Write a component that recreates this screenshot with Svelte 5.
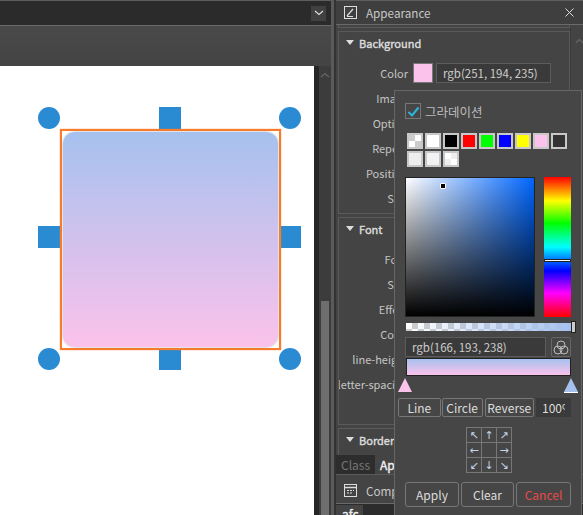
<script>
  // Editor view: canvas with a selected box on the left, appearance panel with colour picker on the right
  const swatches = [
    { cls: 'checker' }, { color: '#ffffff' }, { color: '#000000' }, { color: '#ff0000' }, { color: '#00ff00' },
    { color: '#0000ff' }, { color: '#ffff00' }, { color: '#fbc2eb' }, { color: '#333333' },
    { color: '#eeeeee' }, { color: '#f1f2f4' }, { cls: 'checker alt' },
  ];

  const bgFields = ['Image', 'Option', 'Repeat', 'Position', 'Size'];
  const fontFields = ['Font', 'Size', 'Effect', 'Color', 'line-height', 'letter-spacing'];

  const grid = ['↖', '↑', '↗', '←', '', '→', '↙', '↓', '↘'];
</script>

<div class="app">
  <div class="left">
    <div class="titlebar">
      <span class="chev">
        <svg width="10" height="6" viewBox="0 0 10 6"><path d="M1 1l4 3.5L9 1" fill="none" stroke="#ddd" stroke-width="1.2" /></svg>
      </span>
    </div>
    <div class="toolbar"></div>
    <div class="canvasrow">
      <div class="canvas">
        <div class="handle round" style="left:38px;top:41px"></div>
        <div class="handle" style="left:159px;top:41px"></div>
        <div class="handle round" style="left:279px;top:41px"></div>
        <div class="handle" style="left:38px;top:160px"></div>
        <div class="handle" style="left:279px;top:160px"></div>
        <div class="handle round" style="left:38px;top:282px"></div>
        <div class="handle" style="left:159px;top:282px"></div>
        <div class="handle round" style="left:279px;top:282px"></div>
        <div class="selection"><div class="box"></div></div>
      </div>
      <div class="vscroll">
        <svg class="up" width="10" height="6" viewBox="0 0 10 6"><path d="M1 5l4-3.5L9 5" fill="none" stroke="#666" stroke-width="1.3" /></svg>
        <div class="thumb"></div>
      </div>
    </div>
  </div>

  <div class="splitter"></div>

  <div class="panel">
    <div class="head">
      <svg width="13" height="13" viewBox="0 0 13 13">
        <rect x="0.5" y="0.5" width="12" height="12" fill="none" stroke="#ddd" />
        <path d="M3 10L9 3M3 10.5h6" fill="none" stroke="#ddd" stroke-width="1.2" />
      </svg>
      <span class="head-title">Appearance</span>
      <svg class="close" width="9" height="9" viewBox="0 0 9 9"><path d="M.5.5l8 8M8.5.5l-8 8" stroke="#ddd" /></svg>
    </div>

    <div class="body">
      <div class="sections">
        <div class="stub"></div>

        <section class="group bg">
          <h3><i class="tri"></i>Background</h3>
          <div class="field color">
            <span class="lbl">Color</span>
            <span class="chip"></span>
            <span class="value">rgb(251, 194, 235)</span>
          </div>
          {#each bgFields as f}
            <div class="field"><span class="lbl">{f}</span></div>
          {/each}
        </section>

        <section class="group font">
          <h3><i class="tri"></i>Font</h3>
          {#each fontFields as f}
            <div class="field"><span class="lbl">{f}</span></div>
          {/each}
        </section>

        <section class="group border">
          <h3><i class="tri"></i>Border</h3>
        </section>
      </div>
      <div class="pscroll">
        <svg width="9" height="6" viewBox="0 0 10 6"><path d="M1 5l4-3.5L9 5" fill="none" stroke="#666" stroke-width="1.3" /></svg>
      </div>
    </div>

    <div class="tabs">
      <span class="tab">Class</span>
      <span class="tab on">Appearance</span>
    </div>

    <div class="head comp">
      <svg width="13" height="13" viewBox="0 0 13 13">
        <rect x="0.5" y="0.5" width="12" height="12" fill="none" stroke="#ddd" />
        <path d="M0 3.5h13" stroke="#ddd" stroke-width="1.5" />
        <path d="M3 6.5h2M6 6.5h2M9 6.5h1M3 9h2M6 9h2" stroke="#ddd" />
      </svg>
      <span class="head-title">Comp</span>
    </div>
    <div class="afc"><span>afc</span></div>
  </div>

  <div class="picker">
    <div class="grad-check">
      <span class="check">
        <svg width="13" height="11" viewBox="0 0 13 11"><path d="M1.5 6l3.5 3.5L11.5 1.5" fill="none" stroke="#2bb7dc" stroke-width="2" /></svg>
      </span>
      <span class="grad-label">그라데이션</span>
    </div>

    <div class="swatches">
      {#each swatches as s}
        <span class="swatch {s.cls ?? ''}" style={s.color ? `background:${s.color}` : ''}></span>
      {/each}
    </div>

    <div class="spectrum">
      <div class="sv"><span class="dot"></span></div>
      <div class="hue"><span class="hue-mark"></span></div>
    </div>

    <div class="alpha"><span class="alpha-grip"></span></div>

    <div class="rgb-row">
      <span class="rgb">rgb(166, 193, 238)</span>
      <span class="wheel">
        <svg width="16" height="15" viewBox="0 0 16 15" fill="none" stroke="#bbb">
          <circle cx="8" cy="5" r="4" /><circle cx="5" cy="10" r="4" /><circle cx="11" cy="10" r="4" />
        </svg>
      </span>
    </div>

    <div class="gradbar"></div>
    <div class="stops">
      <svg width="14" height="15" viewBox="0 0 14 15"><path d="M7 0l7 14H0z" fill="#fbc2eb" /></svg>
      <svg width="14" height="15" viewBox="0 0 14 15"><path d="M7 0l7 14H0z" fill="#a6c1ee" /><path d="M0 14.5h14" stroke="#fff" /></svg>
    </div>

    <div class="kinds">
      <span class="btn line">Line</span>
      <span class="btn circle">Circle</span>
      <span class="btn reverse">Reverse</span>
      <input class="pct" value="100%" readonly />
    </div>

    <div class="dirs">
      {#each grid as g}
        <span class="dir">{g}</span>
      {/each}
    </div>

    <div class="actions">
      <span class="act apply">Apply</span>
      <span class="act clear">Clear</span>
      <span class="act cancel">Cancel</span>
    </div>
  </div>
</div>

<style>
  :global(body) {
    background: #444;
  }

  .app {
    position: relative;
    display: flex;
    width: 583px;
    height: 515px;
    overflow: hidden;
    font-family: 'Noto Sans CJK KR', 'Noto Sans', sans-serif;
    font-size: 12px;
    color: #ccc;
    background: #444;
  }

  .left {
    display: flex;
    flex-direction: column;
    width: 331px;
    flex: none;
  }

  .titlebar {
    display: flex;
    justify-content: flex-end;
    align-items: center;
    height: 26px;
    padding-right: 5px;
    box-sizing: border-box;
    background: #2b2b2b;
    border-top: 1px solid #5e5e5e;
    border-bottom: 1px solid #6a6a6a;
  }

  .chev {
    display: flex;
    align-items: center;
    justify-content: center;
    width: 15px;
    height: 15px;
    background: #414141;
  }

  .toolbar {
    height: 40px;
    background: linear-gradient(#494949, #444);
  }

  .canvasrow {
    display: flex;
    flex: 1;
  }

  .canvas {
    position: relative;
    width: 314px;
    background: #fff;
  }

  .handle {
    position: absolute;
    width: 22px;
    height: 22px;
    background: #2a8bd2;
  }

  .round {
    border-radius: 50%;
  }

  .selection {
    position: absolute;
    left: 60px;
    top: 63px;
    width: 221px;
    height: 221px;
    box-sizing: border-box;
    border: 2px solid #f97b2d;
    box-shadow: 0 0 1px #f97b2d;
    padding: 1px;
  }

  .box {
    height: 100%;
    border-radius: 12px;
    background: linear-gradient(#a6c1ee, #fbc2eb);
    box-shadow: 0 0 2px #999;
  }

  .vscroll {
    position: relative;
    width: 17px;
    background: #3c3c3c;
    border-left: 5px solid #262626;
    box-sizing: border-box;
  }

  .up {
    position: absolute;
    left: 1px;
    top: 6px;
  }

  .thumb {
    position: absolute;
    left: 2px;
    right: 2px;
    top: 235px;
    bottom: 0;
    background: #6e6e6e;
  }

  .splitter {
    width: 5px;
    flex: none;
    background: #5a5a5a;
    border-right: 2px solid #333;
    box-sizing: border-box;
  }

  .panel {
    display: flex;
    flex-direction: column;
    flex: 1;
    min-width: 0;
    background: #444;
  }

  .head {
    display: flex;
    align-items: center;
    gap: 9px;
    height: 25px;
    flex: none;
    padding: 0 9px 0 8px;
    box-sizing: border-box;
    background: #3f3f3f;
    border-top: 1px solid #5e5e5e;
    border-bottom: 1px solid #6a6a6a;
    font-size: 11.7px;
    color: #c8c8c8;
  }

  .close {
    margin-left: auto;
  }

  .body {
    display: flex;
    height: 430px;
    flex: none;
    overflow: hidden;
  }

  .sections {
    width: 234px;
    flex: none;
  }

  .pscroll {
    flex: 1;
    padding: 5px 0 0 4px;
    border-left: 1px solid #3a3a3a;
    box-sizing: border-box;
  }

  .stub {
    height: 3px;
    margin: 0 0 0 2px;
    border: 1px solid #5a5a5a;
    border-top: 0;
    box-sizing: border-box;
  }

  .group {
    margin: 3px 0 0 2px;
    border: 1px solid #5a5a5a;
    box-sizing: border-box;
    overflow: hidden;
  }

  .bg {
    height: 183px;
  }

  .font {
    height: 208px;
  }

  .border {
    height: 27px;
    border-bottom: 0;
  }

  h3 {
    display: flex;
    align-items: center;
    margin: 0;
    height: 22px;
    padding: 0 0 1px 7px;
    box-sizing: border-box;
    font-size: 11px;
    font-weight: 400;
    -webkit-text-stroke: 0.4px #ddd;
    color: #ddd;
  }

  .tri {
    width: 0;
    height: 0;
    margin-right: 5px;
    border-left: 4px solid transparent;
    border-right: 4px solid transparent;
    border-top: 5px solid #ddd;
  }

  .field {
    display: flex;
    align-items: center;
    height: 25px;
  }

  .field.color,
  .font .field:first-of-type {
    margin-top: 6px;
  }

  .lbl {
    width: 69px;
    flex: none;
    display: flex;
    justify-content: flex-end;
    white-space: nowrap;
    font-size: 11px;
    color: #c4c4c4;
  }

  .chip {
    width: 20px;
    height: 20px;
    margin-left: 5px;
    box-sizing: border-box;
    background: #fbc2eb;
    border: 1px solid #777;
  }

  .value {
    display: flex;
    align-items: center;
    width: 115px;
    height: 20px;
    margin-left: 3px;
    padding-left: 6px;
    box-sizing: border-box;
    background: #3a3a3a;
    border: 1px solid #5c5c5c;
    white-space: nowrap;
    font-size: 11.5px;
    color: #ccc;
  }

  .tabs {
    display: flex;
    height: 20px;
    flex: none;
    background: #444;
    border-bottom: 1px solid #5a5a5a;
    box-sizing: border-box;
    overflow: hidden;
  }

  .tab {
    display: flex;
    align-items: center;
    padding: 0 5px;
    color: #777;
    background: #2d2d2d;
  }

  .tab.on {
    color: #eee;
    -webkit-text-stroke: 0.4px #eee;
    background: #444;
  }

  .comp {
    height: 26px;
    margin-top: 3px;
    border-top: 0;
    background: #444;
  }

  .afc {
    flex: 1;
    background: #2c2c2c;
    color: #eee;
    -webkit-text-stroke: 0.4px #eee;
    padding-top: 1px;
  }

  .afc span {
    display: block;
    width: 27px;
    padding-left: 6px;
    box-sizing: border-box;
    background: #444;
  }

  .picker {
    position: absolute;
    left: 394px;
    top: 90px;
    width: 188px;
    height: 425px;
    box-sizing: border-box;
    padding: 12px 10px 0;
    background: #464646;
    border: 1px solid #666;
    border-bottom: 0;
    display: flex;
    flex-direction: column;
  }

  .picker > div {
    flex: none;
  }

  .grad-check {
    display: flex;
    align-items: center;
    gap: 4px;
    height: 16px;
  }

  .check {
    display: flex;
    align-items: center;
    justify-content: center;
    width: 16px;
    height: 16px;
    box-sizing: border-box;
    border: 1px solid #777;
  }

  .grad-label {
    font-size: 12.5px;
    color: #bbb;
  }

  .swatches {
    display: flex;
    flex-wrap: wrap;
    gap: 2px;
    margin: 14px 0 0 2px;
  }

  .swatch {
    width: 16px;
    height: 16px;
    box-sizing: border-box;
    border: 2px solid #c8c8c8;
  }

  .checker {
    background: conic-gradient(#fff 25%, #ccc 0 50%, #fff 0 75%, #ccc 0);
  }

  .checker.alt {
    background: conic-gradient(#eee 25%, #fff 0 50%, #eee 0 75%, #fff 0);
  }

  .spectrum {
    display: flex;
    gap: 9px;
    margin-top: 10px;
  }

  .sv {
    position: relative;
    width: 130px;
    height: 140px;
    box-sizing: border-box;
    border: 1px solid #222;
    background:
      linear-gradient(transparent, #000),
      linear-gradient(90deg, #fff, #0066ff);
  }

  .dot {
    position: absolute;
    left: 34px;
    top: 5px;
    width: 4px;
    height: 4px;
    background: #000;
    border: 1px solid #fff;
    border-radius: 1px;
  }

  .hue {
    position: relative;
    width: 27px;
    height: 140px;
    background: linear-gradient(#f00, #ff0 17%, #0f0 33%, #0ff 50%, #00f 67%, #f0f 83%, #f00);
  }

  .hue-mark {
    position: absolute;
    left: 0;
    right: 0;
    top: 82px;
    height: 3px;
    background: #fff;
    border: 1px solid #222;
    box-sizing: border-box;
  }

  .alpha {
    position: relative;
    width: 165px;
    height: 8px;
    margin: 6px 0 0 1px;
    background:
      linear-gradient(90deg, transparent, #a6c1ee),
      repeating-conic-gradient(#ccc 0 25%, #fff 0 50%) 0 0 / 12px 12px;
  }

  .alpha-grip {
    position: absolute;
    right: -5px;
    top: -2px;
    width: 5px;
    height: 12px;
    box-sizing: border-box;
    background: #ccc;
    border: 1px solid #222;
  }

  .rgb-row {
    display: flex;
    gap: 5px;
    margin-top: 6px;
  }

  .rgb {
    display: flex;
    align-items: center;
    width: 141px;
    height: 20px;
    padding-left: 6px;
    box-sizing: border-box;
    background: #3a3a3a;
    border: 1px solid #5c5c5c;
    font-size: 11.5px;
  }

  .wheel {
    display: flex;
    align-items: center;
    justify-content: center;
    width: 20px;
    height: 20px;
    box-sizing: border-box;
    border: 1px solid #666;
    border-radius: 2px;
  }

  .gradbar {
    width: 165px;
    height: 18px;
    margin: 1px 0 0 1px;
    box-sizing: border-box;
    border: 1px solid #222;
    background: linear-gradient(#a6c1ee, #fbc2eb);
  }

  .stops {
    display: flex;
    justify-content: space-between;
    margin: 2px 0 0 -7px;
    width: 180px;
    height: 15px;
  }

  .kinds {
    display: flex;
    margin: 5px 0 0 -7px;
    height: 19px;
  }

  .btn {
    display: flex;
    align-items: center;
    justify-content: center;
    box-sizing: border-box;
    border: 1px solid #777;
    border-radius: 2px;
    color: #ddd;
  }

  .line {
    width: 45px;
  }

  .circle {
    width: 43px;
    margin-left: 1px;
  }

  .reverse {
    width: 52px;
    margin-left: 2px;
  }

  .pct {
    width: 35px;
    height: 19px;
    margin: 0 0 0 2px;
    padding: 0 6px;
    box-sizing: border-box;
    border: 0;
    outline: 0;
    font: inherit;
    background: #3a3a3a;
    color: #ddd;
  }

  .dirs {
    display: grid;
    grid-template-columns: repeat(3, 15px);
    grid-auto-rows: 15px;
    width: 46px;
    margin: 10px 0 0 61px;
    box-sizing: border-box;
    border: 1px solid #777;
    border-width: 1px 0 0 1px;
  }

  .dir {
    display: flex;
    align-items: center;
    justify-content: center;
    border: 1px solid #777;
    border-width: 0 1px 1px 0;
    font-family: 'DejaVu Sans', sans-serif;
    font-size: 11px;
    line-height: 1;
    color: #c2d4e8;
  }

  .actions {
    display: flex;
    gap: 2px;
    margin-top: 9px;
  }

  .act {
    display: flex;
    align-items: center;
    justify-content: center;
    height: 25px;
    box-sizing: border-box;
    border: 1px solid #777;
    border-radius: 3px;
    color: #ddd;
  }

  .apply {
    width: 54px;
  }

  .clear {
    width: 53px;
  }

  .cancel {
    width: 55px;
    color: #e84a4a;
  }
</style>
